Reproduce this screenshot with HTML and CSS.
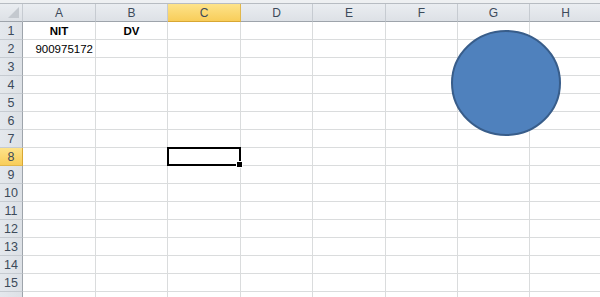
FILE: index.html
```html
<!DOCTYPE html>
<html lang="es">
<head>
  <meta charset="UTF-8">
  <meta name="viewport" content="width=device-width, initial-scale=1.0">
  <title>Hoja1</title>
  <link rel="stylesheet" href="styles.css">
</head>
<body>
  <div class="sheet">
    <div class="top-strip"></div>

    <div class="row head-row">
      <div class="corner"><span class="corner-tri"></span></div>
      <div class="col-head">A</div>
      <div class="col-head">B</div>
      <div class="col-head active">C</div>
      <div class="col-head">D</div>
      <div class="col-head">E</div>
      <div class="col-head">F</div>
      <div class="col-head">G</div>
      <div class="col-head">H</div>
    </div>

    <div class="row">
      <div class="row-head">1</div>
      <div class="cell bold center">NIT</div>
      <div class="cell bold center">DV</div>
      <div class="cell"></div><div class="cell"></div><div class="cell"></div><div class="cell"></div><div class="cell"></div><div class="cell"></div>
    </div>
    <div class="row">
      <div class="row-head">2</div>
      <div class="cell right">900975172</div>
      <div class="cell"></div><div class="cell"></div><div class="cell"></div><div class="cell"></div><div class="cell"></div><div class="cell"></div><div class="cell"></div>
    </div>
    <div class="row">
      <div class="row-head">3</div>
      <div class="cell"></div><div class="cell"></div><div class="cell"></div><div class="cell"></div><div class="cell"></div><div class="cell"></div><div class="cell"></div><div class="cell"></div>
    </div>
    <div class="row">
      <div class="row-head">4</div>
      <div class="cell"></div><div class="cell"></div><div class="cell"></div><div class="cell"></div><div class="cell"></div><div class="cell"></div><div class="cell"></div><div class="cell"></div>
    </div>
    <div class="row">
      <div class="row-head">5</div>
      <div class="cell"></div><div class="cell"></div><div class="cell"></div><div class="cell"></div><div class="cell"></div><div class="cell"></div><div class="cell"></div><div class="cell"></div>
    </div>
    <div class="row">
      <div class="row-head">6</div>
      <div class="cell"></div><div class="cell"></div><div class="cell"></div><div class="cell"></div><div class="cell"></div><div class="cell"></div><div class="cell"></div><div class="cell"></div>
    </div>
    <div class="row">
      <div class="row-head">7</div>
      <div class="cell"></div><div class="cell"></div><div class="cell"></div><div class="cell"></div><div class="cell"></div><div class="cell"></div><div class="cell"></div><div class="cell"></div>
    </div>
    <div class="row">
      <div class="row-head active">8</div>
      <div class="cell"></div><div class="cell"></div>
      <div class="cell selected"><span class="fill-handle"></span></div>
      <div class="cell"></div><div class="cell"></div><div class="cell"></div><div class="cell"></div><div class="cell"></div>
    </div>
    <div class="row">
      <div class="row-head">9</div>
      <div class="cell"></div><div class="cell"></div><div class="cell"></div><div class="cell"></div><div class="cell"></div><div class="cell"></div><div class="cell"></div><div class="cell"></div>
    </div>
    <div class="row">
      <div class="row-head">10</div>
      <div class="cell"></div><div class="cell"></div><div class="cell"></div><div class="cell"></div><div class="cell"></div><div class="cell"></div><div class="cell"></div><div class="cell"></div>
    </div>
    <div class="row">
      <div class="row-head">11</div>
      <div class="cell"></div><div class="cell"></div><div class="cell"></div><div class="cell"></div><div class="cell"></div><div class="cell"></div><div class="cell"></div><div class="cell"></div>
    </div>
    <div class="row">
      <div class="row-head">12</div>
      <div class="cell"></div><div class="cell"></div><div class="cell"></div><div class="cell"></div><div class="cell"></div><div class="cell"></div><div class="cell"></div><div class="cell"></div>
    </div>
    <div class="row">
      <div class="row-head">13</div>
      <div class="cell"></div><div class="cell"></div><div class="cell"></div><div class="cell"></div><div class="cell"></div><div class="cell"></div><div class="cell"></div><div class="cell"></div>
    </div>
    <div class="row">
      <div class="row-head">14</div>
      <div class="cell"></div><div class="cell"></div><div class="cell"></div><div class="cell"></div><div class="cell"></div><div class="cell"></div><div class="cell"></div><div class="cell"></div>
    </div>
    <div class="row">
      <div class="row-head">15</div>
      <div class="cell"></div><div class="cell"></div><div class="cell"></div><div class="cell"></div><div class="cell"></div><div class="cell"></div><div class="cell"></div><div class="cell"></div>
    </div>
    <!-- fila 16, solo asoma el borde superior -->
    <div class="row">
      <div class="row-head"></div>
      <div class="cell"></div><div class="cell"></div><div class="cell"></div><div class="cell"></div><div class="cell"></div><div class="cell"></div><div class="cell"></div><div class="cell"></div>
    </div>

    <!-- forma flotante (elipse) -->
    <svg class="shape" width="112" height="108" viewBox="0 0 112 108">
      <ellipse cx="56" cy="54" rx="54" ry="52" fill="#4f81bd" stroke="#385d8a" stroke-width="2"/>
    </svg>
  </div>
</body>
</html>
```

FILE: styles.css
```css
body {
  margin: 0;
  width: 600px;
  height: 297px;
  overflow: hidden;
  background-color: #fff;
  font-family: 'Liberation Sans', Arial, sans-serif;
}

.sheet {
  position: relative;
  width: 600px;
  height: 297px;
  overflow: hidden;
}

.top-strip {
  height: 3px;
  background-color: #eef0f2;
  border-bottom: 1px solid #b7bcc2;
}

.row {
  display: grid;
  grid-template-columns: 23px 73px 72px 73px 72px 73px 72px 72px 72px;
  height: 18px;
}

.row > div {
  box-sizing: border-box;
  height: 18px;
}

.head-row > div {
  background: linear-gradient(#eaedf1, #dde1e6);
  border-right: 1px solid #c6cbd1;
  border-bottom: 1px solid #9ea4ab;
  color: #3c4a5a;
  font-size: 12px;
  line-height: 18px;
  text-align: center;
}

.corner {
  position: relative;
}

.corner-tri {
  position: absolute;
  right: 3px;
  bottom: 3px;
  width: 0;
  height: 0;
  border-left: 11px solid transparent;
  border-bottom: 11px solid #c4c9cf;
}

.head-row .active {
  background: linear-gradient(#fde38a, #f8cd5a);
  border-right-color: #e1b74b;
  border-bottom-color: #d8a733;
  color: #3c4a5a;
}

.row-head {
  background: linear-gradient(90deg, #e4e8ed, #dde1e6);
  border-right: 1px solid #9ea4ab;
  border-bottom: 1px solid #c6cbd1;
  color: #3c4a5a;
  font-size: 12.5px;
  line-height: 19px;
  text-align: center;
}

.row-head.active {
  background: linear-gradient(#fde38a, #f8cd5a);
  border-bottom-color: #e1b74b;
  border-right-color: #d8a733;
}

.cell {
  border-right: 1px solid #dadcdd;
  border-bottom: 1px solid #dadcdd;
  font-size: 11.5px;
  line-height: 19px;
  color: #000;
  padding: 0 2px;
  white-space: nowrap;
}

.bold {
  font-weight: bold;
}

.center {
  text-align: center;
}

.right {
  text-align: right;
}

.selected {
  position: relative;
}

.selected::after {
  content: '';
  position: absolute;
  left: -1px;
  top: -1px;
  right: -1px;
  bottom: -1px;
  border: 2px solid #000;
}

.fill-handle {
  position: absolute;
  right: -3px;
  bottom: -3px;
  width: 5px;
  height: 5px;
  background-color: #000;
  border: 1px solid #fff;
  z-index: 2;
}

.shape {
  position: absolute;
  left: 450px;
  top: 29px;
}
```
